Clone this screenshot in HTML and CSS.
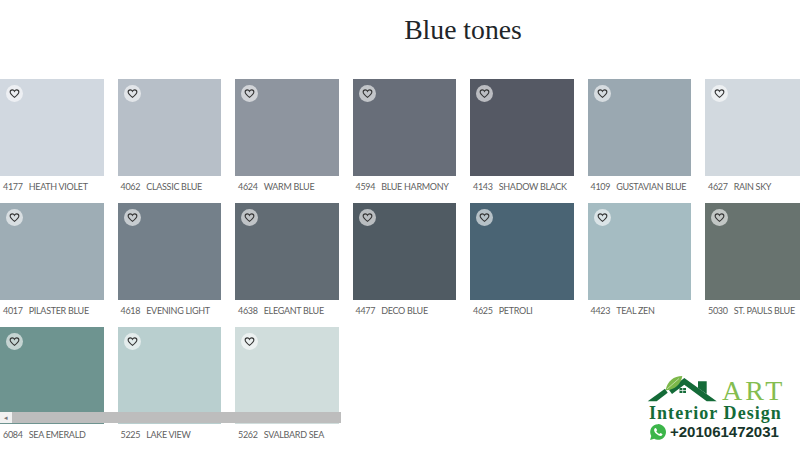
FILE: index.html
```html
<!DOCTYPE html>
<html lang="en">

<head>
    <meta charset="UTF-8">
    <meta name="viewport" content="width=device-width, initial-scale=1.0">
    <title>Blue tones</title>
    <link rel="stylesheet" href="styles.css">
</head>

<body>
    <h1 class="title">Blue tones</h1>

    <svg width="0" height="0" class="defs">
        <symbol id="heart" viewBox="0 0 24 24">
            <path d="M12 20.5C5.5 15.5 2.5 12.4 2.5 8.8 2.5 6 4.7 4 7.2 4 9.1 4 11 5 12 7c1-2 2.900-3 4.800-3 2.500 0 4.700 2 4.700 4.800 0 3.600-3 6.700-9.500 11.700z" fill="none" stroke="#333" stroke-width="2.400" />
        </symbol>
    </svg>

    <div class="grid">
        <div class="tile"><div class="swatch c4177"><span class="fav"><svg class="heart"><use href="#heart" /></svg></span></div><p class="label"><span>4177</span>HEATH VIOLET</p></div>
        <div class="tile"><div class="swatch c4062"><span class="fav"><svg class="heart"><use href="#heart" /></svg></span></div><p class="label"><span>4062</span>CLASSIC BLUE</p></div>
        <div class="tile"><div class="swatch c4624"><span class="fav"><svg class="heart"><use href="#heart" /></svg></span></div><p class="label"><span>4624</span>WARM BLUE</p></div>
        <div class="tile"><div class="swatch c4594"><span class="fav"><svg class="heart"><use href="#heart" /></svg></span></div><p class="label"><span>4594</span>BLUE HARMONY</p></div>
        <div class="tile"><div class="swatch c4143"><span class="fav"><svg class="heart"><use href="#heart" /></svg></span></div><p class="label"><span>4143</span>SHADOW BLACK</p></div>
        <div class="tile"><div class="swatch c4109"><span class="fav"><svg class="heart"><use href="#heart" /></svg></span></div><p class="label"><span>4109</span>GUSTAVIAN BLUE</p></div>
        <div class="tile"><div class="swatch c4627"><span class="fav"><svg class="heart"><use href="#heart" /></svg></span></div><p class="label"><span>4627</span>RAIN SKY</p></div>

        <div class="tile"><div class="swatch c4017"><span class="fav"><svg class="heart"><use href="#heart" /></svg></span></div><p class="label"><span>4017</span>PILASTER BLUE</p></div>
        <div class="tile"><div class="swatch c4618"><span class="fav"><svg class="heart"><use href="#heart" /></svg></span></div><p class="label"><span>4618</span>EVENING LIGHT</p></div>
        <div class="tile"><div class="swatch c4638"><span class="fav"><svg class="heart"><use href="#heart" /></svg></span></div><p class="label"><span>4638</span>ELEGANT BLUE</p></div>
        <div class="tile"><div class="swatch c4477"><span class="fav"><svg class="heart"><use href="#heart" /></svg></span></div><p class="label"><span>4477</span>DECO BLUE</p></div>
        <div class="tile"><div class="swatch c4625"><span class="fav"><svg class="heart"><use href="#heart" /></svg></span></div><p class="label"><span>4625</span>PETROLI</p></div>
        <div class="tile"><div class="swatch c4423"><span class="fav"><svg class="heart"><use href="#heart" /></svg></span></div><p class="label"><span>4423</span>TEAL ZEN</p></div>
        <div class="tile"><div class="swatch c5030"><span class="fav"><svg class="heart"><use href="#heart" /></svg></span></div><p class="label"><span>5030</span>ST. PAULS BLUE</p></div>

        <div class="tile"><div class="swatch c6084"><span class="fav"><svg class="heart"><use href="#heart" /></svg></span></div><p class="label"><span>6084</span>SEA EMERALD</p></div>
        <div class="tile"><div class="swatch c5225"><span class="fav"><svg class="heart"><use href="#heart" /></svg></span></div><p class="label"><span>5225</span>LAKE VIEW</p></div>
        <div class="tile"><div class="swatch c5262"><span class="fav"><svg class="heart"><use href="#heart" /></svg></span></div><p class="label"><span>5262</span>SVALBARD SEA</p></div>
    </div>

    <!-- scrollbar sits over the last row -->
    <div class="scrollbar">
        <span class="scroll-btn">&#9666;</span>
        <span class="scroll-thumb"></span>
    </div>

    <div class="logo">
        <div class="logo-top">
            <svg class="logo-house" viewBox="0 0 75 31">
                <path d="M2.700 29.300 20 16.700l2.700 4-11 8.600z" fill="#146b38" />
                <path d="M39.300 6 71.700 29.300H61.700L39.300 12.700 27 22l-3-4z" fill="#146b38" />
                <path d="M53 9.300h8.700V22L53 16z" fill="#146b38" />
                <path d="M20.700 18.300C22 9 29 4 37.300 4 36 12 30 18 20.700 18.300z" fill="#7cb84a" />
                <path d="M22 17 34 6.500" stroke="#d8ebc4" stroke-width="0.700" fill="none" />
                <rect x="34.500" y="16" width="6.500" height="5" fill="#146b38" />
                <path d="M37.700 16v5M34.500 18.500h6.500" stroke="#fff" stroke-width="0.700" />
            </svg>
            <span class="logo-art">ART</span>
        </div>
        <div class="logo-name">Interior Design</div>
        <div class="logo-phone">
            <svg class="logo-wa" viewBox="0 0 24 24">
                <path d="M12 1.500a10.500 10.500 0 0 0-9 15.800L1.500 22.500l5.400-1.400A10.500 10.500 0 1 0 12 1.500z" fill="#3cb54a" />
                <path d="M8.500 6.500c-.5 0-1.700 1-1.700 2.700 0 2 1.500 4 3.300 5.600 2 1.700 4 2.500 5.200 2.500 1.500 0 2.700-1.300 2.700-2.300 0-.4-2.400-1.700-2.800-1.700-.5 0-1 1.300-1.500 1.300-1.300 0-3.900-2.500-3.900-3.500 0-.5 1-1 1-1.500 0-.4-1.200-3.100-2.300-3.100z" fill="#fff" />
            </svg>
            <span>+201061472031</span>
        </div>
    </div>
</body>

</html>
```
FILE: styles.css
```css
body {
    margin: 0;
    height: 450px;
    overflow: hidden;
    background: #fff;
    font-family: "Lato", sans-serif;
    position: relative;
}

.defs {
    display: block;
    height: 0;
}

.title {
    margin: 0;
    padding-top: 13px;
    padding-left: 126px;
    height: 79px;
    box-sizing: border-box;
    text-align: center;
    font-family: "Liberation Serif", serif;
    font-weight: 400;
    font-size: 27.7px;
    line-height: 34px;
    color: #212529;
}

.grid {
    display: grid;
    grid-template-columns: repeat(7, 103.5px);
    column-gap: 14px;
    grid-auto-rows: 124px;
}

.swatch {
    height: 97px;
    padding: 6px;
    box-sizing: border-box;
}

.fav {
    display: flex;
    align-items: center;
    justify-content: center;
    width: 17px;
    height: 17px;
    border-radius: 50%;
    background: rgba(255, 255, 255, 0.6);
}

.heart {
    width: 11px;
    height: 11px;
}

.label {
    margin: 5px 0 0 3px;
    font-size: 9px;
    line-height: 12px;
    letter-spacing: -0.3px;
    color: #5f5f5f;
    white-space: nowrap;
}

.label span {
    margin-right: 6px;
}

.c4177 { background: #d1d8e0; }
.c4062 { background: #b7bfc8; }
.c4624 { background: #8e959f; }
.c4594 { background: #686e79; }
.c4143 { background: #555964; }
.c4109 { background: #9aa8b1; }
.c4627 { background: #d2d9df; }
.c4017 { background: #9eadb5; }
.c4618 { background: #74808a; }
.c4638 { background: #626c74; }
.c4477 { background: #505b63; }
.c4625 { background: #4a6474; }
.c4423 { background: #a5bcc2; }
.c5030 { background: #68736f; }
.c6084 { background: #6e9490; }
.c5225 { background: #b9cfcf; }
.c5262 { background: #d0dddc; }

.scrollbar {
    position: absolute;
    left: 0;
    top: 412px;
    width: 341px;
    height: 11px;
    display: flex;
    background: #f1f1f1;
}

.scroll-btn {
    width: 12px;
    font-size: 7px;
    line-height: 11px;
    text-align: center;
    color: #777;
}

.scroll-thumb {
    flex: 1;
    background: #bdbdbd;
}

.logo {
    position: absolute;
    left: 645px;
    top: 372px;
    width: 145px;
}

.logo-top {
    display: flex;
    align-items: flex-end;
    height: 31px;
}

.logo-house {
    width: 75px;
    height: 31px;
    flex: none;
}

.logo-art {
    font-family: "Liberation Serif", serif;
    font-size: 28px;
    line-height: 28px;
    color: #84bd50;
    margin: 0 0 -2px 2px;
    letter-spacing: 3px;
}

.logo-name {
    font-family: "Liberation Serif", serif;
    font-weight: 700;
    font-size: 18px;
    line-height: 18px;
    letter-spacing: 1.05px;
    color: #146b38;
    margin: 1px 0 0 4px;
    white-space: nowrap;
}

.logo-phone {
    display: flex;
    align-items: center;
    gap: 3px;
    margin: 1px 0 0 4px;
    font-family: "Liberation Sans", sans-serif;
    font-weight: 700;
    font-size: 15px;
    line-height: 18px;
    color: #17352a;
}

.logo-wa {
    width: 18px;
    height: 18px;
    flex: none;
}
```
